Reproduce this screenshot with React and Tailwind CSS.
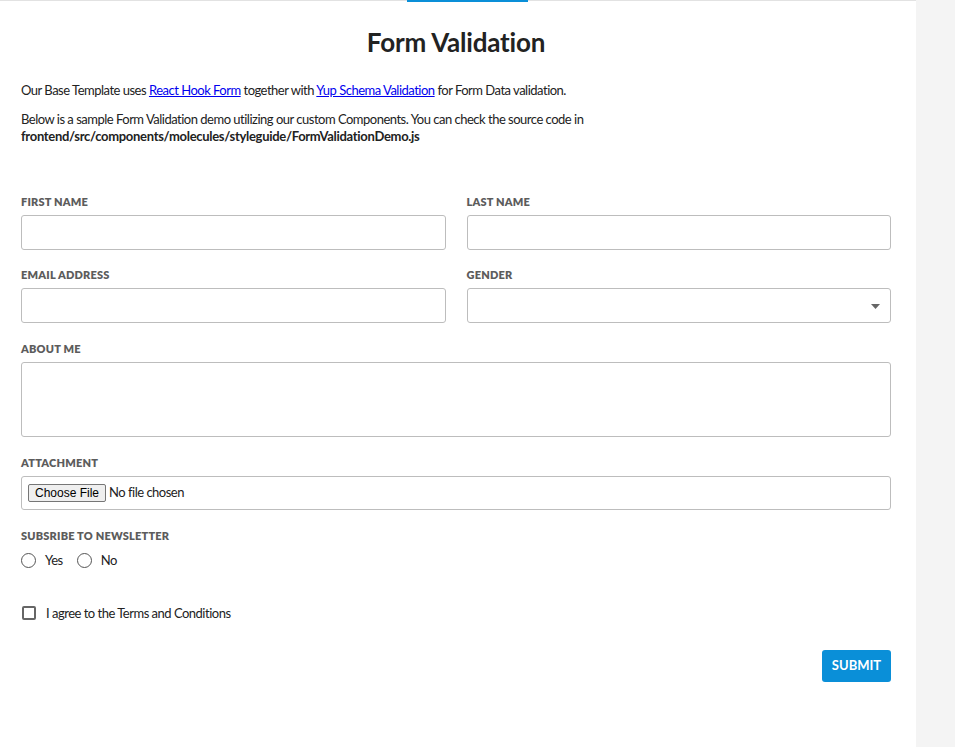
import React from "react";

function Label({ children }) {
  return (
    <div className="text-[11px] font-extrabold uppercase tracking-[0.2px] text-[#5c5c5c] leading-[14px] mb-[6px]">
      {children}
    </div>
  );
}

function TextField({ label }) {
  return (
    <div className="flex-1">
      <Label>{label}</Label>
      <input
        type="text"
        className="w-full h-[35px] border border-[#bdbdbd] rounded-[3px] px-3 text-sm outline-none"
      />
    </div>
  );
}

export default function App() {
  return (
    <div className="flex min-h-[747px] bg-[#f4f4f4] font-['Lato',sans-serif] text-[#222]">
      <div className="w-[916px] bg-white relative border-t border-[#e2e2e2] pl-[21px] pr-[25px] pb-10">
        <div className="absolute left-[407px] -top-px w-[121px] h-[2px] bg-[#0a8fd8]" />

        <h1 className="text-center text-[26px] font-bold text-[#222] mt-[26px] leading-[30px] tracking-[-0.2px]">
          Form Validation
        </h1>

        <div className="text-[13px] tracking-[-0.5px] leading-[17px]">
          <p className="mt-[25px]">
            Our Base Template uses{" "}
            <a href="#" className="text-[#0000ee] underline">React Hook Form</a>{" "}
            together with{" "}
            <a href="#" className="text-[#0000ee] underline">Yup Schema Validation</a>{" "}
            for Form Data validation.
          </p>
          <p className="mt-[12px]">
            Below is a sample Form Validation demo utilizing our custom Components. You can check the source code in
            <br />
            <b className="tracking-[-0.3px]">frontend/src/components/molecules/styleguide/FormValidationDemo.js</b>
          </p>
        </div>

        <form className="mt-[50px]" onSubmit={(e) => e.preventDefault()}>
          <div className="flex gap-[21px]">
            <TextField label="First Name" />
            <TextField label="Last Name" />
          </div>

          <div className="flex gap-[21px] mt-[18px]">
            <TextField label="Email Address" />
            <div className="flex-1">
              <Label>Gender</Label>
              <div className="relative h-[35px] border border-[#bdbdbd] rounded-[3px]">
                <svg className="absolute right-[10px] top-[15px]" width="9" height="5" viewBox="0 0 9 5">
                  <path d="M0 0h9L4.5 5z" fill="#666" />
                </svg>
              </div>
            </div>
          </div>

          <div className="mt-[19px]">
            <Label>About Me</Label>
            <textarea className="w-full h-[75px] block border border-[#bdbdbd] rounded-[3px] resize-none outline-none" />
          </div>

          <div className="mt-[19px]">
            <Label>Attachment</Label>
            <div className="h-[34px] border border-[#bdbdbd] rounded-[3px] flex items-center pl-[6px]">
              <span className="font-['Liberation_Sans',sans-serif] text-[12px] leading-[14px] px-[6px] py-px bg-[#efefef] border border-[#767676] rounded-[2px] text-black tracking-normal">
                Choose File
              </span>
              <span className="ml-[3px] text-[13px] tracking-[-0.5px] text-[#222]">No file chosen</span>
            </div>
          </div>

          <div className="mt-[19px]">
            <Label>Subsribe to Newsletter</Label>
            <div className="flex items-center text-[13px] tracking-[-0.5px] mt-[8px]">
              <span className="w-[15px] h-[15px] rounded-full border border-[#555]" />
              <span className="ml-[9px]">Yes</span>
              <span className="ml-[14px] w-[15px] h-[15px] rounded-full border border-[#555]" />
              <span className="ml-[9px]">No</span>
            </div>
          </div>

          <div className="flex items-center mt-[33px] text-[13px] tracking-[-0.5px]">
            <span className="ml-px w-[14px] h-[14px] rounded-[2px] border-2 border-[#666]" />
            <span className="ml-[10px]">I agree to the Terms and Conditions</span>
          </div>

          <div className="flex justify-end mt-[27px]">
            <button
              type="submit"
              className="w-[69px] h-[32px] bg-[#0a8fd8] text-white text-[13px] font-bold rounded-[3px]"
            >
              SUBMIT
            </button>
          </div>
        </form>
      </div>
    </div>
  );
}
